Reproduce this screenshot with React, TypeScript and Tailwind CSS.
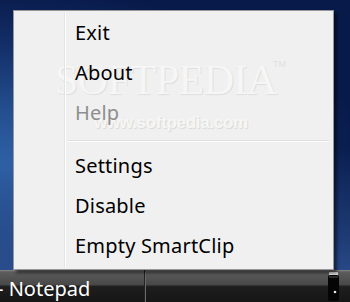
import React from "react";

const font = { fontFamily: '"Noto Sans", "Open Sans", sans-serif' };

function Item({ label, disabled }: { label: string; disabled?: boolean }) {
  return (
    <div
      className={`h-[40px] flex items-center pl-[61px] text-[20px] leading-none tracking-[0.2px] ${
        disabled ? "text-[#8e8e8e]" : "text-black"
      }`}
    >
      {label}
    </div>
  );
}

export default function App() {
  return (
    <div
      className="w-[350px] h-[302px] flex flex-col overflow-hidden relative bg-[radial-gradient(ellipse_at_0%_55%,#2f62a8_0%,#234d8e_25%,#14306a_50%,#081a4a_75%),linear-gradient(#000,#000)]"
      style={font}
    >
      <div className="h-[270px] pl-[13px] pt-[10px] relative bg-[linear-gradient(to_bottom,transparent_55%,rgba(45,80,145,0.85)_100%)]">
        <div className="relative w-[321px] h-[260px] border border-[#979797] bg-[#f0f0f0] shadow-[3px_3px_3px_rgba(0,0,0,0.5)] flex">
          {/* watermark (behind the items) */}
          <div
            className="absolute left-[41px] top-[48px] text-[42px] leading-none text-[#f6f6f6] tracking-[-0.5px] [text-shadow:1px_1px_1px_rgba(0,0,0,0.08)] pointer-events-none select-none"
            style={{ fontFamily: '"Liberation Serif", serif' }}
          >
            SOFTPEDIA
          </div>
          <div
            className="absolute left-[259px] top-[47px] text-[9px] text-[#e0e0e0] pointer-events-none select-none"
            style={{ fontFamily: '"Liberation Sans", sans-serif' }}
          >
            TM
          </div>
          <div
            className="absolute left-[80px] top-[103px] text-[17px] font-bold leading-none text-[#f6f6f6] [text-shadow:1px_1px_1px_rgba(0,0,0,0.1)] tracking-[-0.3px] pointer-events-none select-none"
            style={{ fontFamily: '"Liberation Sans", sans-serif' }}
          >
            www.softpedia.com
          </div>
          <div className="absolute left-[50px] top-[2px] bottom-[2px] w-[2px] border-l border-[#e2e3e3] bg-white" />
          <div className="flex-1 flex flex-col pt-[2px] relative">
            <Item label="Exit" />
            <Item label="About" />
            <Item label="Help" disabled />
            <div className="h-[13px] pt-[7px] pl-[54px] pr-[4px]">
              <div className="h-[2px] border-t border-[#e0e0e0] bg-white" />
            </div>
            <Item label="Settings" />
            <Item label="Disable" />
            <Item label="Empty SmartClip" />
          </div>
        </div>
      </div>
      <div className="h-[32px] flex bg-[linear-gradient(to_bottom,#8a8a8a_0%,#5c5c5c_6%,#494949_45%,#1e1e1e_52%,#161616_100%)]">
        <div className="w-[144px] flex items-end pb-[3px] -ml-[3px] text-white text-[20px] leading-none whitespace-nowrap">
          - Notepad
        </div>
        <div className="w-[2px] h-full border-l border-[#222] bg-[#6a6a6a] ml-[3px]" />
        <div className="flex-1" />
        <div className="w-[22px] flex items-start pt-[2px]">
          <svg width="11" height="29" viewBox="0 0 11 29">
            <rect x="1" y="0" width="9" height="4" rx="1" fill="#d8d8d8" />
            <rect x="0" y="3" width="11" height="26" rx="2" fill="#050505" />
            <rect x="1" y="4" width="9" height="2" fill="#2a2a2a" />
            <circle cx="7" cy="20" r="1.3" fill="#e6e6e6" />
          </svg>
        </div>
      </div>
    </div>
  );
}
